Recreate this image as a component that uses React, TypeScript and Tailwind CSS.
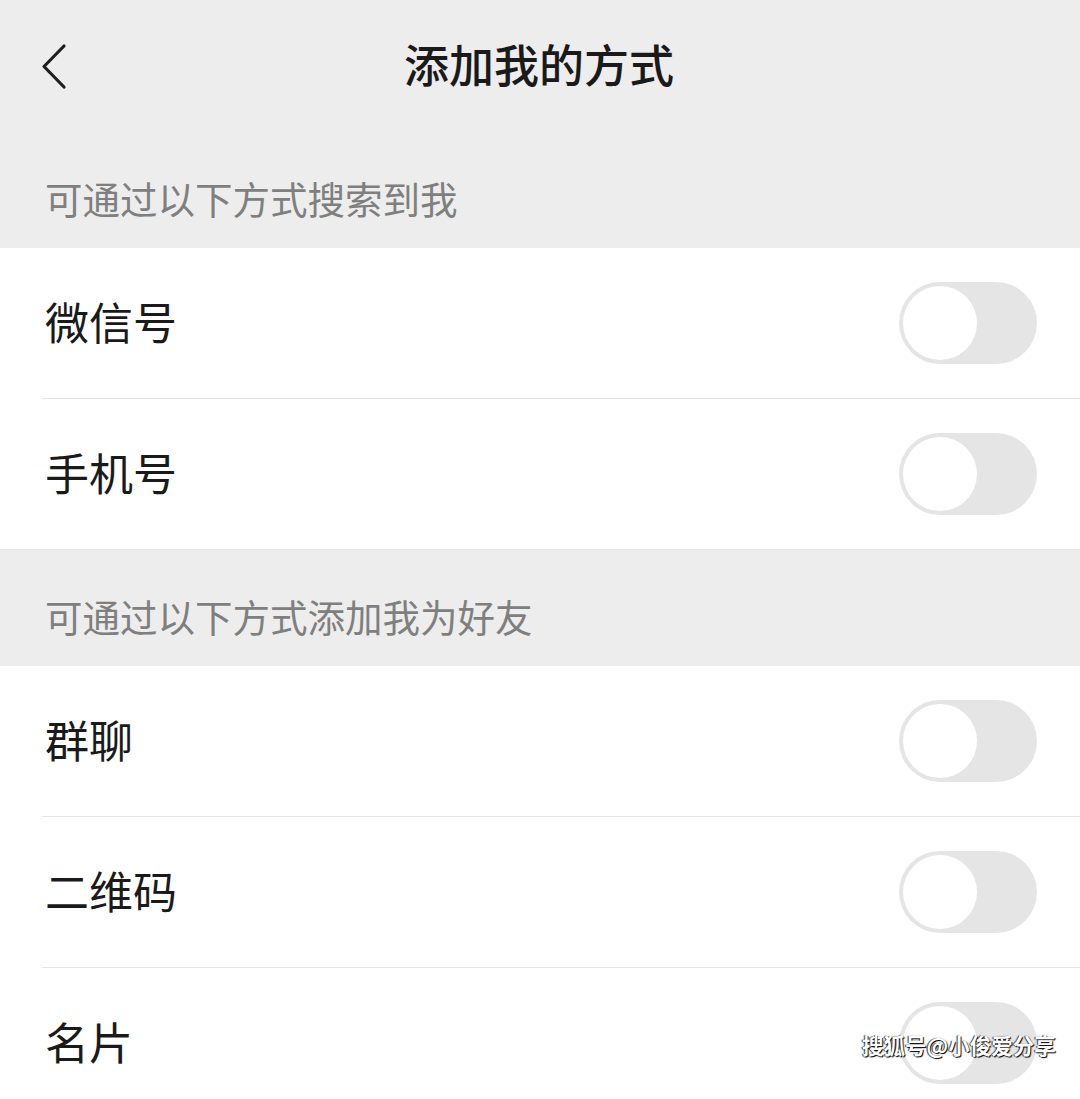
const font = {
  fontFamily: '"Noto Sans CJK SC", "Noto Sans", sans-serif',
};

const Toggle = () => (
  <div className="relative w-[138px] h-[82px] rounded-full bg-[#e5e5e5] shrink-0">
    <div className="absolute left-[4px] top-[4px] w-[74px] h-[74px] rounded-full bg-white" />
  </div>
);

const Row = ({ label, divider }: { label: string; divider?: boolean }) => (
  <div className="bg-white">
    <div className="h-[150px] flex items-center justify-between pl-[45px] pr-[43px]">
      <span className="text-[44px] leading-none text-[#1a1a1a] mt-[-5px]">{label}</span>
      <Toggle />
    </div>
    {divider && <div className="ml-[42px] h-px bg-[#e6e6e6]" />}
  </div>
);

const SectionLabel = ({ text }: { text: string }) => (
  <div className="bg-[#ededed] pl-[45px] pt-[47px] pb-[32px]">
    <span className="block text-[37.5px] leading-[37px] text-[#7f7f7f]">{text}</span>
  </div>
);

export default function App() {
  return (
    <div className="relative min-h-screen bg-white overflow-hidden" style={font}>
      {/* nav bar */}
      <div className="relative h-[132px] bg-[#ededed] flex items-center justify-center">
        <svg
          className="absolute left-[40px] top-[43px]"
          width="27"
          height="47"
          viewBox="0 0 27 47"
          fill="none"
        >
          <path
            d="M24 3 L4 23.5 L24 44"
            stroke="#1f1f1f"
            strokeWidth="3.2"
            strokeLinecap="round"
            strokeLinejoin="round"
          />
        </svg>
        <h1 className="text-[45px] leading-none font-medium text-[#1a1a1a] ml-[-2px] mt-[-6px]">
          添加我的方式
        </h1>
      </div>

      <SectionLabel text="可通过以下方式搜索到我" />
      <Row label="微信号" divider />
      <Row label="手机号" />

      <div className="h-px bg-[#e6e6e6]" />
      <SectionLabel text="可通过以下方式添加我为好友" />
      <Row label="群聊" divider />
      <Row label="二维码" divider />
      <Row label="名片" />

      {/* watermark */}
      <div className="absolute left-[862px] top-[1034px] text-[21.5px] leading-none font-bold text-white [text-shadow:1px_1px_1px_#000,-1px_0_1px_#333]">
        搜狐号@小俊爱分享
      </div>
    </div>
  );
}
